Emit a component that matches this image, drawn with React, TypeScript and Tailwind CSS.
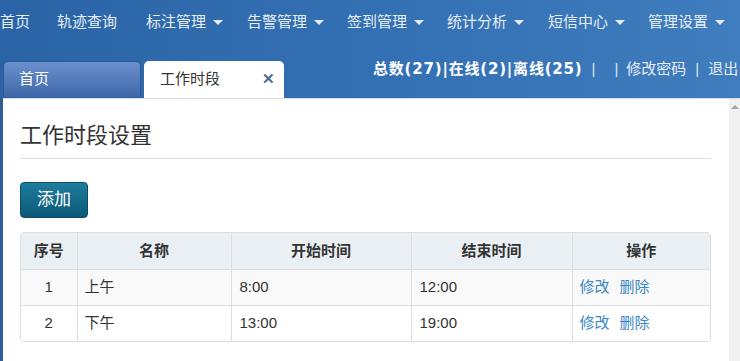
import React from "react";

const font = { fontFamily: '"Liberation Sans", "Noto Sans CJK SC", sans-serif' };
const boldFont = { fontFamily: '"DejaVu Sans", "Noto Sans CJK SC", sans-serif' };

function Caret() {
  return (
    <span className="ml-[7px] inline-block w-0 h-0 border-t-[5px] border-t-[#e3ebf4] border-x-[5px] border-x-transparent align-middle" />
  );
}

export default function App() {
  const rows = [
    { no: "1", name: "上午", start: "8:00", end: "12:00", bg: "bg-[#f9f9f9]" },
    { no: "2", name: "下午", start: "13:00", end: "19:00", bg: "bg-white" },
  ];
  return (
    <div
      className="w-[740px] h-[361px] overflow-hidden bg-gradient-to-r from-[#2a64a6] via-[#3370b3] to-[#3f7dbf] text-[15px]"
      style={font}
    >
      <header className="h-[98px] flex flex-col">
        <nav className="h-[45px] flex items-center text-[#e6edf5] whitespace-nowrap">
          <span>首页</span>
          <span className="ml-[27px]">轨迹查询</span>
          <span className="ml-[29px] flex items-center">标注管理<Caret /></span>
          <span className="ml-[24px] flex items-center">告警管理<Caret /></span>
          <span className="ml-[23px] flex items-center">签到管理<Caret /></span>
          <span className="ml-[23px] flex items-center">统计分析<Caret /></span>
          <span className="ml-[24px] flex items-center">短信中心<Caret /></span>
          <span className="ml-[23px] flex items-center">管理设置<Caret /></span>
        </nav>
        <div className="flex items-start pt-[17px] pl-[3px] whitespace-nowrap">
          <div className="w-[138px] h-[36px] rounded-t-[5px] border border-[#2d5a94] border-b-0 bg-gradient-to-b from-[#6b90cc] to-[#3f67a9] text-white flex items-center pl-[15px]">
            首页
          </div>
          <div className="ml-[3px] w-[140px] h-[37px] rounded-t-[5px] bg-white text-[#333] flex items-center pl-[16px] pr-[9px]">
            <span>工作时段</span>
            <span className="ml-auto text-[#4f6b88] font-bold text-[15px]">✕</span>
          </div>
          <div className="ml-[89px] -mt-[3px] flex items-center text-white">
            <span className="font-bold tracking-[0.8px]" style={boldFont}>总数(27)|在线(2)|离线(25)</span>
            <span className="ml-[9px] text-[#dbe6f2]">|</span>
            <span className="ml-[19px] text-[#dbe6f2]">|</span>
            <span className="ml-[8px] text-[#e6edf5]">修改密码</span>
            <span className="ml-[9px] text-[#dbe6f2]">|</span>
            <span className="ml-[9px] text-[#e6edf5]">退出</span>
          </div>
        </div>
      </header>
      <div className="flex h-[263px]">
        <div className="w-[3px] bg-[#2f5e96]" />
        <main className="flex-1 bg-white border-t border-[#dcdcdc] pl-[17px] pr-[18px]">
          <div className="mt-[21px] h-[32px] leading-[32px] text-[22px] text-[#333] pb-[6px] box-content border-b border-[#e0e0e0]">
            工作时段设置
          </div>
          <button className="mt-[23px] w-[68px] h-[36px] rounded-[4px] border border-[#0b4d68] bg-gradient-to-b from-[#1d7d9e] to-[#0d5876] text-white text-[17px] flex items-center justify-center">
            添加
          </button>
          <div className="mt-[14px] w-[691px] rounded-[4px] border border-[#dddddd] overflow-hidden">
            <table className="w-full table-fixed border-collapse text-[#333] text-[15px]">
              <colgroup>
                <col className="w-[56px]" />
                <col className="w-[154px]" />
                <col className="w-[180px]" />
                <col className="w-[161px]" />
                <col />
              </colgroup>
              <thead>
                <tr className="h-[36px] bg-[#eaeff3] font-bold">
                  <th className="text-center">序号</th>
                  <th className="text-center border-l border-[#dddddd]">名称</th>
                  <th className="text-center border-l border-[#dddddd]">开始时间</th>
                  <th className="text-center border-l border-[#dddddd]">结束时间</th>
                  <th className="text-center border-l border-[#dddddd]">操作</th>
                </tr>
              </thead>
              <tbody>
                {rows.map((r) => (
                  <tr key={r.no} className={`h-[36px] border-t border-[#dddddd] ${r.bg}`}>
                    <td className="text-center">{r.no}</td>
                    <td className="pl-[7px] border-l border-[#dddddd]">{r.name}</td>
                    <td className="pl-[8px] border-l border-[#dddddd]">{r.start}</td>
                    <td className="pl-[8px] border-l border-[#dddddd]">{r.end}</td>
                    <td className="pl-[7px] border-l border-[#dddddd] text-[#3a87c4]">
                      修改<span className="ml-[10px]">删除</span>
                    </td>
                  </tr>
                ))}
              </tbody>
            </table>
          </div>
        </main>
        <div className="w-[11px] bg-[#f0f0f0] border-t border-[#dcdcdc] flex justify-center pt-[6px]">
          <span className="w-0 h-0 border-b-[4px] border-b-[#a3a3a3] border-x-[4px] border-x-transparent" />
        </div>
      </div>
    </div>
  );
}
